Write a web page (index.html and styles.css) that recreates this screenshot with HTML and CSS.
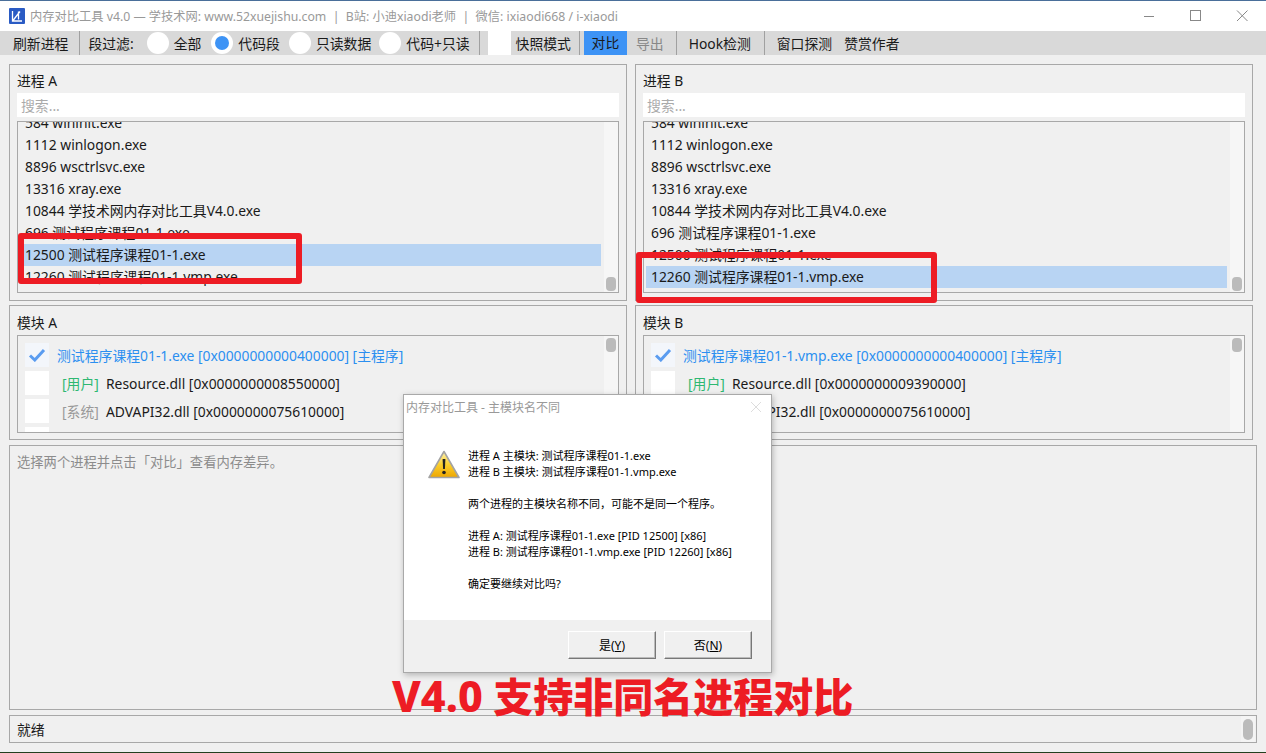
FILE: index.html
```html
<!DOCTYPE html>
<html lang="zh-CN">
  <head>
    <meta charset="utf-8" />
    <title>内存对比工具 v4.0</title>
    <link rel="stylesheet" href="styles.css">
  </head>
  <body>
    <div class="window">
      <!-- Title bar -->
      <div class="titlebar">
        <svg class="app-icon" width="16" height="16" viewBox="0 0 16 16">
          <rect width="16" height="16" rx="1" fill="#2a5bc4"/>
          <path d="M3.5 3v10h9.5M4 12.5 11 3.5M9.5 3.5v8" fill="none" stroke="#fff" stroke-width="1.3"/>
        </svg>
        <span class="title-text">内存对比工具 v4.0 — 学技术网: www.52xuejishu.com &nbsp;|&nbsp; B站: 小迪xiaodi老师 &nbsp;|&nbsp; 微信: ixiaodi668 / i-xiaodi</span>
        <div class="win-buttons">
          <svg width="46" height="31" viewBox="0 0 46 31"><path d="M16 15.500h10" stroke="#888" fill="none"/></svg>
          <svg width="46" height="31" viewBox="0 0 46 31"><rect x="16.500" y="9.500" width="10" height="10" stroke="#888" fill="none"/></svg>
          <svg width="46" height="31" viewBox="0 0 46 31"><path d="M17 9.500l10.500 10.500M27.500 9.500 17 20" stroke="#888" fill="none"/></svg>
        </div>
      </div>

      <!-- Toolbar -->
      <div class="toolbar">
        <span class="tool tool-refresh">刷新进程</span>
        <span class="sep"></span>
        <span class="tool filter-label">段过滤:</span>
        <span class="radio r1"></span><span class="radio-label">全部</span>
        <span class="radio checked r2"></span><span class="radio-label">代码段</span>
        <span class="radio r3"></span><span class="radio-label">只读数据</span>
        <span class="radio r4"></span><span class="radio-label">代码+只读</span>
        <span class="sep sep-filter"></span>
        <span class="snap-box"></span>
        <span class="tool snap-label">快照模式</span>
        <span class="sep sep-snap"></span>
        <span class="tool-active">对比</span>
        <span class="tool tool-disabled">导出</span>
        <span class="sep"></span>
        <span class="tool tool-hook">Hook检测</span>
        <span class="sep"></span>
        <span class="tool tool-window">窗口探测</span>
        <span class="tool tool-donate">赞赏作者</span>
      </div>

      <div class="content">
        <div class="columns">
          <!-- Process A -->
          <section class="panel panel-process">
            <div class="panel-title">进程 A</div>
            <div class="search">搜索...</div>
            <div class="list">
              <div class="rows">
                <div class="row">584 wininit.exe</div>
                <div class="row">1112 winlogon.exe</div>
                <div class="row">8896 wsctrlsvc.exe</div>
                <div class="row">13316 xray.exe</div>
                <div class="row">10844 学技术网内存对比工具V4.0.exe</div>
                <div class="row">696 测试程序课程01-1.exe</div>
                <div class="row selected">12500 测试程序课程01-1.exe</div>
                <div class="row">12260 测试程序课程01-1.vmp.exe</div>
              </div>
              <div class="scroll"><span class="thumb thumb-bottom"></span></div>
            </div>
          </section>

          <!-- Process B -->
          <section class="panel panel-process">
            <div class="panel-title">进程 B</div>
            <div class="search">搜索...</div>
            <div class="list">
              <div class="rows">
                <div class="row">584 wininit.exe</div>
                <div class="row">1112 winlogon.exe</div>
                <div class="row">8896 wsctrlsvc.exe</div>
                <div class="row">13316 xray.exe</div>
                <div class="row">10844 学技术网内存对比工具V4.0.exe</div>
                <div class="row">696 测试程序课程01-1.exe</div>
                <div class="row">12500 测试程序课程01-1.exe</div>
                <div class="row selected">12260 测试程序课程01-1.vmp.exe</div>
              </div>
              <div class="scroll"><span class="thumb thumb-bottom"></span></div>
            </div>
          </section>

          <!-- Module A -->
          <section class="panel panel-module">
            <div class="panel-title">模块 A</div>
            <div class="list module-list">
              <div class="mod-row main">
                <span class="check checked"><svg width="18" height="14" viewBox="0 0 18 14"><path d="M2 7.500 6.800 12 16 2" fill="none" stroke="#5a9cf0" stroke-width="3"/></svg></span>
                <span>测试程序课程01-1.exe [0x0000000000400000] [主程序]</span>
              </div>
              <div class="mod-row">
                <span class="check"></span>
                <span class="tag tag-user">[用户]</span><span>Resource.dll [0x0000000008550000]</span>
              </div>
              <div class="mod-row">
                <span class="check"></span>
                <span class="tag tag-sys">[系统]</span><span>ADVAPI32.dll [0x0000000075610000]</span>
              </div>
              <div class="mod-row"><span class="check"></span></div>
              <div class="scroll"><span class="thumb"></span></div>
            </div>
          </section>

          <!-- Module B -->
          <section class="panel panel-module">
            <div class="panel-title">模块 B</div>
            <div class="list module-list">
              <div class="mod-row main">
                <span class="check checked"><svg width="18" height="14" viewBox="0 0 18 14"><path d="M2 7.500 6.800 12 16 2" fill="none" stroke="#5a9cf0" stroke-width="3"/></svg></span>
                <span>测试程序课程01-1.vmp.exe [0x0000000000400000] [主程序]</span>
              </div>
              <div class="mod-row">
                <span class="check"></span>
                <span class="tag tag-user">[用户]</span><span>Resource.dll [0x0000000009390000]</span>
              </div>
              <div class="mod-row">
                <span class="check"></span>
                <span class="tag tag-sys">[系统]</span><span>ADVAPI32.dll [0x0000000075610000]</span>
              </div>
              <div class="mod-row"><span class="check"></span></div>
              <div class="scroll"><span class="thumb"></span></div>
            </div>
          </section>
        </div>

        <section class="output">选择两个进程并点击「对比」查看内存差异。</section>

        <section class="status">
          <span>就绪</span>
          <span class="status-track"><span class="status-thumb"></span></span>
        </section>
      </div>

      <!-- Annotations drawn over the app -->
      <div class="mark mark-a"></div>
      <div class="mark mark-b"></div>
      <div class="banner"><span class="banner-ver">V4.0</span> 支持非同名进程对比</div>

      <!-- Message box -->
      <div class="dialog">
        <div class="dialog-title">
          <span>内存对比工具 - 主模块名不同</span>
          <svg width="12" height="12" viewBox="0 0 12 12"><path d="M1 1l10 10M11 1 1 11" stroke="#ddd" fill="none"/></svg>
        </div>
        <div class="dialog-body">
          <svg class="warn" width="32" height="30" viewBox="0 0 32 30">
            <defs>
              <linearGradient id="warnFill" x1="0" y1="0" x2="0" y2="1">
                <stop offset="0" stop-color="#fff3b0"/>
                <stop offset="0.5" stop-color="#fbcf2e"/>
                <stop offset="1" stop-color="#eda600"/>
              </linearGradient>
            </defs>
            <path d="M16 1.500 31 27.500H1z" fill="url(#warnFill)" stroke="#a3a3a3" stroke-width="1.600" stroke-linejoin="round"/>
            <path d="M14.600 9h2.800l-.5 10h-1.800z" fill="#222"/>
            <circle cx="16" cy="22.500" r="1.800" fill="#222"/>
          </svg>
          <div class="dialog-text">
            <p>进程 A 主模块: 测试程序课程01-1.exe</p>
            <p>进程 B 主模块: 测试程序课程01-1.vmp.exe</p>
            <p>&nbsp;</p>
            <p>两个进程的主模块名称不同，可能不是同一个程序。</p>
            <p>&nbsp;</p>
            <p>进程 A: 测试程序课程01-1.exe [PID 12500] [x86]</p>
            <p>进程 B: 测试程序课程01-1.vmp.exe [PID 12260] [x86]</p>
            <p>&nbsp;</p>
            <p>确定要继续对比吗?</p>
          </div>
        </div>
        <div class="dialog-foot">
          <button class="dlg-btn">是(<u>Y</u>)</button>
          <button class="dlg-btn">否(<u>N</u>)</button>
        </div>
      </div>
    </div>
  </body>
</html>
```

FILE: styles.css
```css
/* Base */
* {
  margin: 0;
  padding: 0;
  box-sizing: border-box;
}

html, body {
  width: 1266px;
  height: 753px;
  overflow: hidden;
}

body {
  font-family: 'Noto Sans', 'Noto Sans CJK SC', sans-serif;
  font-size: 13.850px;
  color: #1a1a1a;
  background: #24401f;
}

.window {
  position: relative;
  width: 1266px;
  height: 752px;
  background: #f0f0f0;
  border-top: 1px solid #4a6f9a;
  overflow: hidden;
}

/* Title bar */
.titlebar {
  display: flex;
  align-items: center;
  height: 30px;
  padding-left: 9px;
  background: #fff;
}

.title-text {
  margin-left: 5px;
  font-size: 12.250px;
  color: #999;
  white-space: nowrap;
}

.win-buttons {
  display: flex;
  margin-left: auto;
}

/* Toolbar */
.toolbar {
  display: flex;
  align-items: center;
  height: 24px;
  background: #d9d9d9;
  white-space: nowrap;
}

.tool-refresh {
  margin-left: 13px;
  margin-right: 11px;
}

.filter-label {
  margin-left: 8px;
}

.tool-disabled {
  margin-left: 9px;
  margin-right: 12px;
  color: #888;
}

.tool-hook {
  margin-left: 12px;
  margin-right: 13px;
}

.tool-window {
  margin-left: 12px;
}

.tool-donate {
  margin-left: 12px;
}

.sep {
  width: 1px;
  height: 24px;
  background: #a0a0a0;
}

.radio {
  position: relative;
  flex: none;
  width: 22px;
  height: 22px;
  margin-left: 13px;
  margin-right: 5px;
  border-radius: 50%;
  background: #fff;
}

.radio.checked::after {
  content: "";
  position: absolute;
  top: 4px;
  left: 4px;
  width: 14px;
  height: 14px;
  border-radius: 50%;
  background: #3d93f5;
}

.radio.r2 { margin-left: 10px; }
.radio.r3 { margin-left: 9px; }
.radio.r4 { margin-left: 8px; }

.sep-filter {
  margin-left: 9px;
}

.snap-box {
  width: 23px;
  height: 24px;
  margin-left: 8px;
  background: #fff;
}

.snap-label {
  margin-left: 5px;
}

.sep-snap {
  margin-left: 8px;
}

.tool-active {
  width: 43px;
  height: 24px;
  margin-left: 4px;
  line-height: 24px;
  text-align: center;
  background: #3d93f5;
}

/* Panels */
.content {
  padding: 9px 0 0 9px;
}

.columns {
  display: grid;
  grid-template-columns: 618px 618px;
  grid-template-rows: 237px 135px;
  column-gap: 8px;
  row-gap: 4px;
}

.panel {
  padding: 0 7px;
  border: 1px solid #a8a8a8;
}

.panel-title {
  height: 28px;
  padding-top: 6px;
  line-height: 20px;
}

.panel-module .panel-title {
  padding-top: 7px;
}

.search {
  height: 24px;
  padding-left: 4px;
  line-height: 25px;
  color: #aaa;
  background: #fff;
}

.list {
  position: relative;
  overflow: hidden;
  height: 172px;
  margin-top: 4px;
  border: 1px solid #a8a8a8;
}

.rows {
  margin-top: -10px;
  padding-left: 2px;
}

.row {
  width: 581px;
  height: 22px;
  padding-left: 5px;
  line-height: 22px;
  white-space: nowrap;
}

.row.selected {
  background: #b8d4f3;
}

.scroll {
  position: absolute;
  top: 0;
  right: 0;
  bottom: 0;
  width: 14px;
  background: #f6f6f6;
}

.thumb {
  position: absolute;
  top: 2px;
  left: 2px;
  width: 10px;
  height: 14px;
  border-radius: 4px;
  background: #bbb;
}

.thumb-bottom {
  top: auto;
  bottom: 1px;
}

/* Module lists */
.module-list {
  height: 98px;
  margin-top: 1px;
  padding: 7px 0 0 7px;
}

.mod-row {
  display: flex;
  align-items: center;
  height: 24px;
  margin-bottom: 4px;
  white-space: nowrap;
}

.mod-row.main {
  color: #2b8ff0;
}

.check {
  display: flex;
  flex: none;
  align-items: center;
  justify-content: center;
  width: 24px;
  height: 24px;
  margin-right: 8px;
  background: #fff;
}

.check.checked {
  background: #f3f6fb;
}

.tag {
  width: 44px;
  margin-left: 5px;
}

.tag-user { color: #2eb872; }
.tag-sys { color: #999; }

/* Output and status */
.output {
  width: 1248px;
  height: 265px;
  margin-top: 5px;
  padding: 6px 7px;
  font-size: 13.300px;
  color: #8c8c8c;
  border: 1px solid #a8a8a8;
}

.status {
  display: flex;
  align-items: center;
  justify-content: space-between;
  width: 1248px;
  height: 28px;
  margin-top: 5px;
  padding-left: 7px;
  border: 1px solid #a8a8a8;
}

.status-track {
  display: flex;
  align-items: center;
  justify-content: center;
  width: 14px;
  height: 26px;
  margin-right: 1px;
  background: #f4f4f4;
}

.status-thumb {
  width: 10px;
  height: 21px;
  border-radius: 5px;
  background: #bbb;
}

/* Red annotations */
.mark {
  position: absolute;
  border: 6px solid #ed1c24;
  border-radius: 3px;
}

.mark-a {
  top: 232px;
  left: 18px;
  width: 284px;
  height: 51px;
}

.mark-b {
  top: 251px;
  left: 636px;
  width: 301px;
  height: 51px;
}

.banner {
  position: absolute;
  top: 667px;
  left: 392px;
  font-size: 40px;
  font-weight: 900;
  line-height: 56px;
  color: #ed1c24;
  white-space: nowrap;
}

.banner-ver {
  font-size: 43px;
  font-weight: 800;
}

/* Message box */
.dialog {
  position: absolute;
  top: 393px;
  left: 403px;
  display: flex;
  flex-direction: column;
  width: 369px;
  height: 279px;
  background: #fff;
  border: 1px solid #a9a9a9;
  box-shadow: 1px 2px 6px rgba(0, 0, 0, 0.25);
  font-size: 11px;
  color: #000;
}

.dialog-title {
  display: flex;
  align-items: center;
  justify-content: space-between;
  height: 24px;
  padding: 0 9px 0 2px;
  font-size: 12px;
  color: #999;
}

.dialog-body {
  display: flex;
  flex: 1;
  padding: 29px 0 0 24px;
}

.warn {
  flex: none;
  margin-top: 2px;
}

.dialog-text {
  margin-left: 8px;
}

.dialog-text p {
  height: 16px;
  line-height: 16px;
  white-space: nowrap;
}

.dialog-foot {
  display: flex;
  justify-content: flex-end;
  gap: 8px;
  height: 52px;
  padding: 11px 19px 0 0;
  background: #f0f0f0;
}

.dlg-btn {
  width: 88px;
  height: 28px;
  font-family: inherit;
  font-size: 12px;
  color: #000;
  background: #f0f0f0;
  border: 1px solid;
  border-color: #fff #777 #777 #fff;
  box-shadow: inset -1px -1px 0 #bbb;
}
```
